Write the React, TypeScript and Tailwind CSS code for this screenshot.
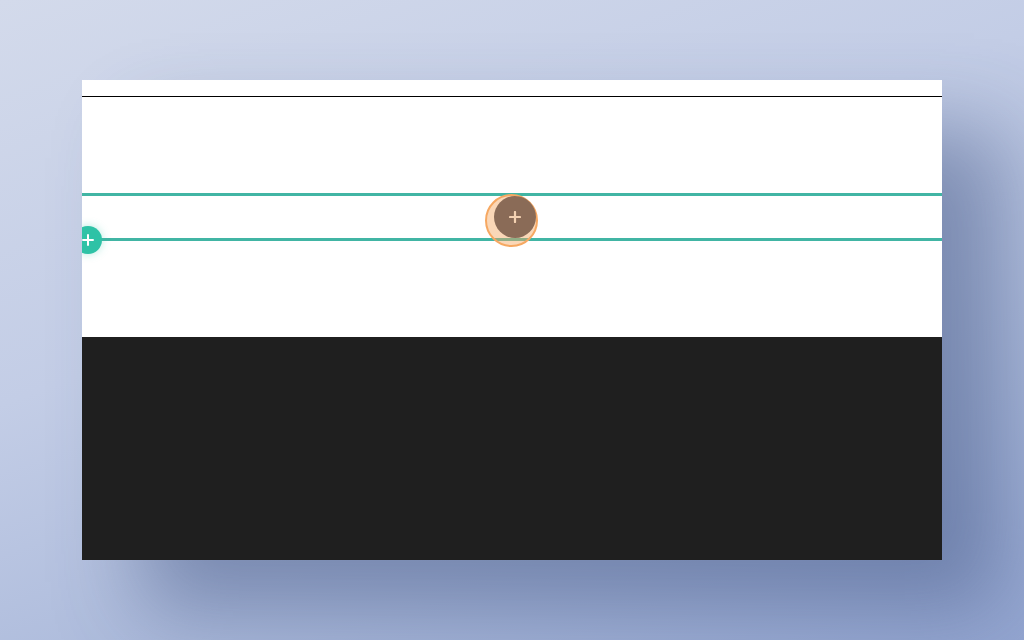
export default function App() {
  return (
    <div className="h-[640px] w-[1024px] overflow-hidden bg-[linear-gradient(160deg,#d3daeb_0%,#c3cde6_40%,#a9b8da_75%,#95a7d2_100%)] pl-[82px] pt-[80px]">
      {/* Canvas card */}
      <div className="relative flex h-[480px] w-[860px] flex-col overflow-hidden bg-white shadow-[60px_50px_80px_rgba(50,70,120,0.45)]">
        <div className="relative h-[257px] bg-white">
          <div className="mt-[16px] h-px bg-black" />
          <div className="mt-[96px] h-[3px] bg-[#41b5a4]" />
          <div className="mt-[42px] h-[3px] bg-[#41b5a4]" />

          {/* drop target ring */}
          <div className="absolute left-[403px] top-[114px] h-[53px] w-[53px] rounded-full border-2 border-[#f6a862] bg-[#f4a660]/45" />
          {/* dragged add button */}
          <div className="absolute left-[412px] top-[116px] flex h-[42px] w-[42px] items-center justify-center rounded-full bg-[#8a6b57]">
            <svg width="12" height="12" viewBox="0 0 12 12">
              <path d="M6 1v10M1 6h10" stroke="#f5d2b2" strokeWidth="2.2" strokeLinecap="round" />
            </svg>
          </div>

          {/* row add button */}
          <div className="absolute left-[-8px] top-[146px] flex h-[28px] w-[28px] items-center justify-center rounded-full bg-[#2ec2a6] shadow-[0_0_8px_rgba(46,194,166,0.35)]">
            <svg width="12" height="12" viewBox="0 0 12 12">
              <path d="M6 1v10M1 6h10" stroke="#ffffff" strokeWidth="2" strokeLinecap="round" />
            </svg>
          </div>
        </div>
        <div className="flex-1 bg-[#1f1f1f]" />
      </div>
    </div>
  );
}
